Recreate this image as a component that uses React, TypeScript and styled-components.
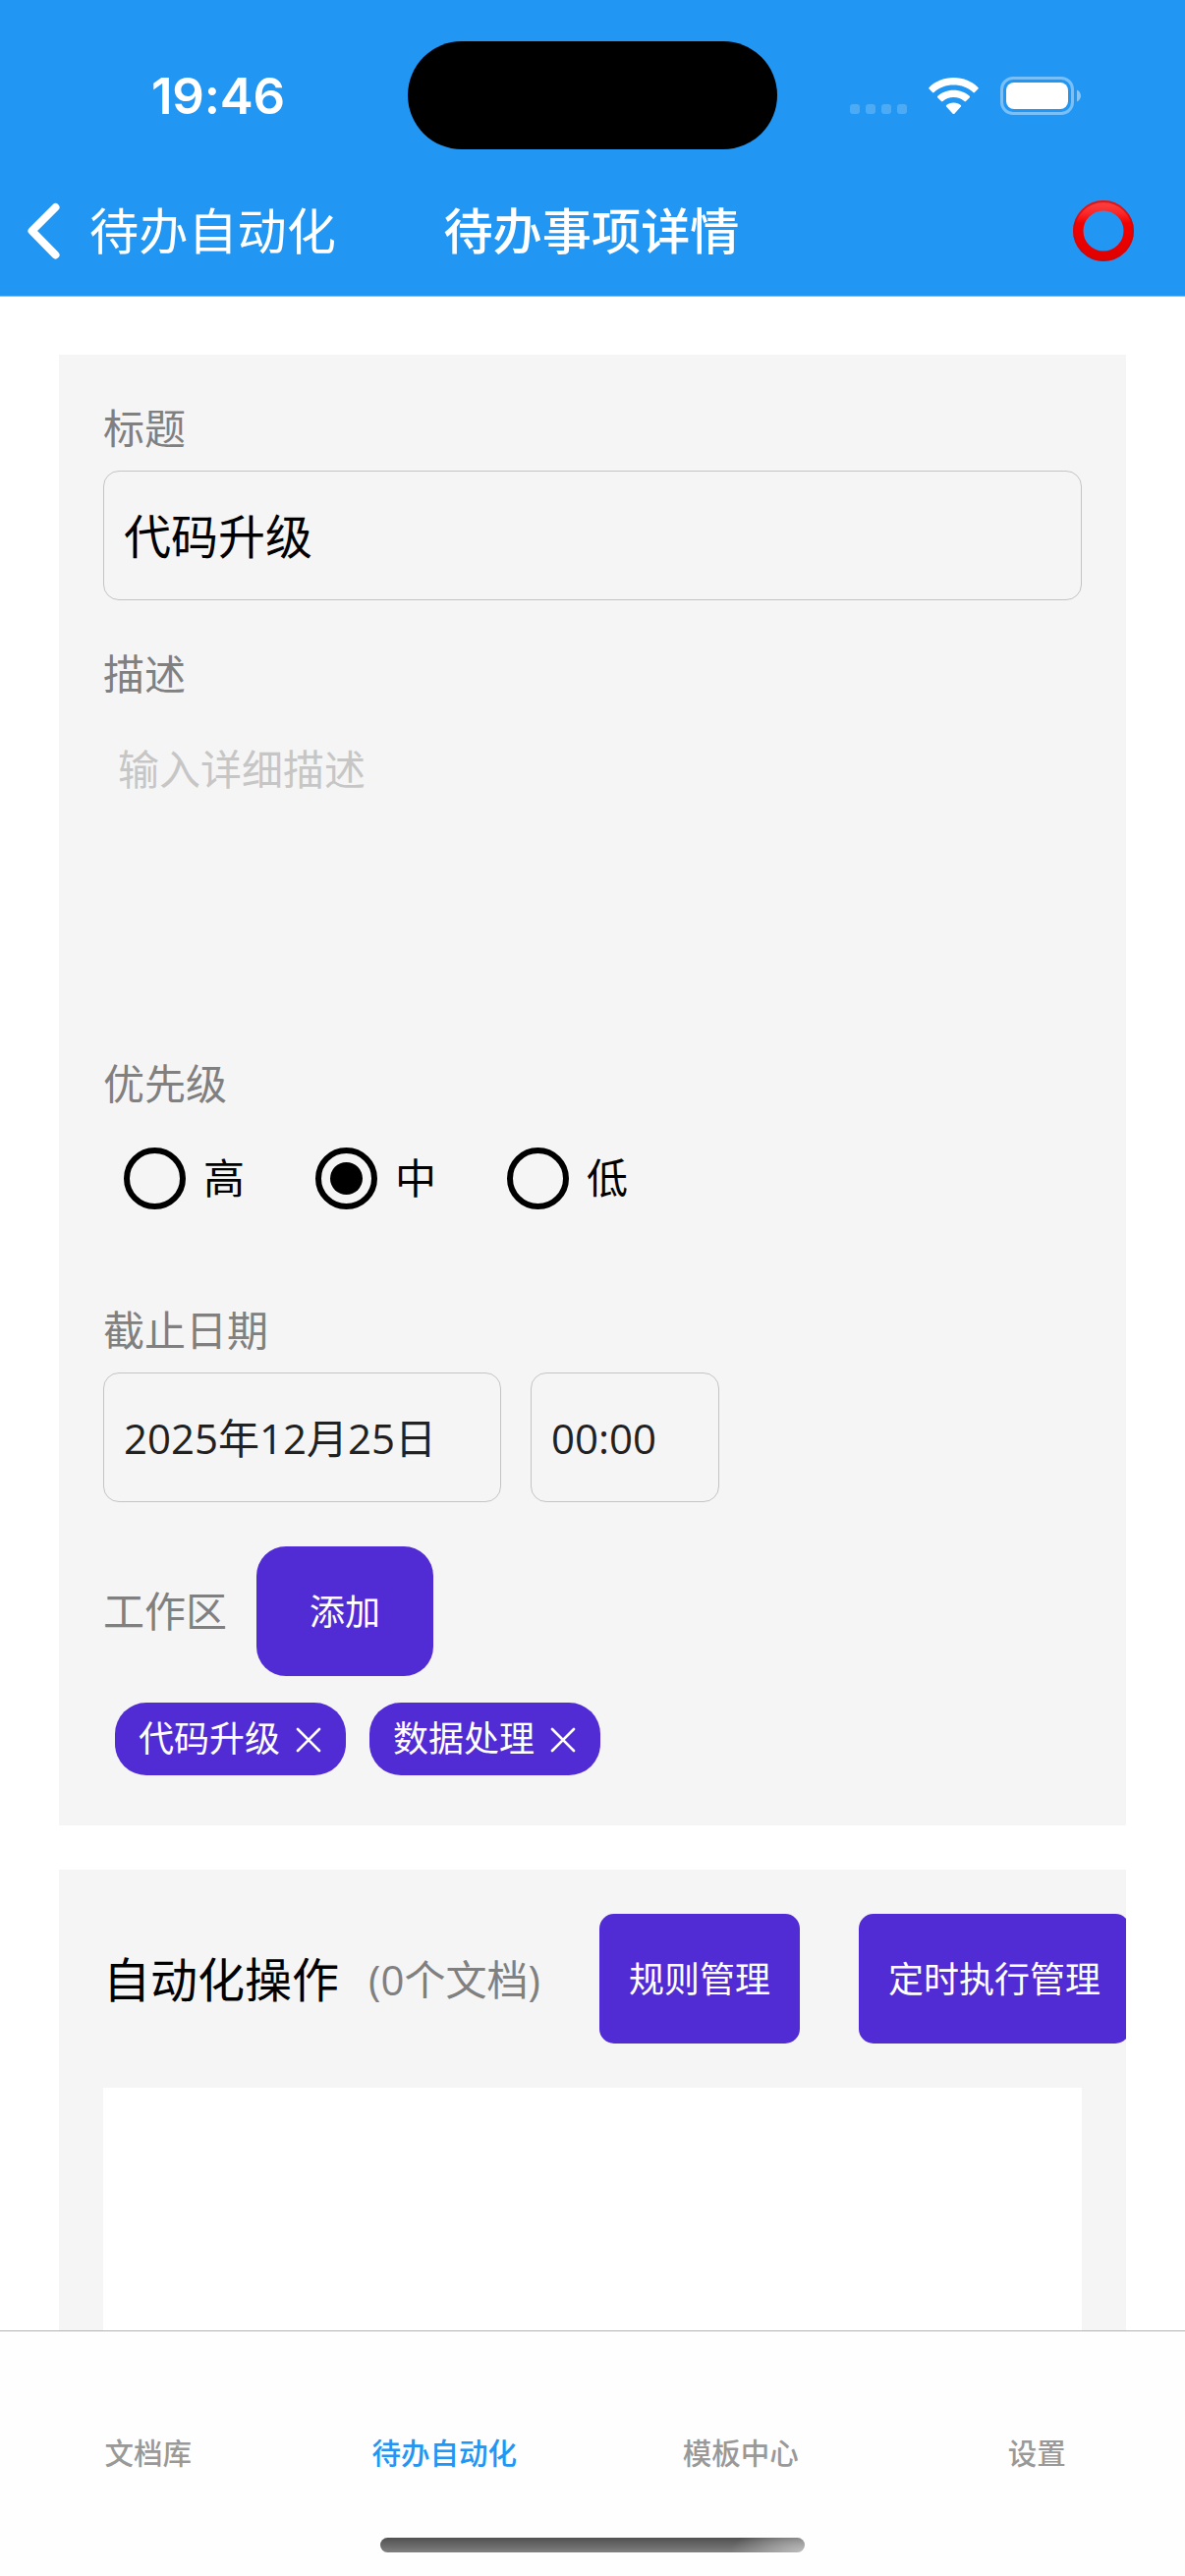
import React from "react";
import styled, { createGlobalStyle } from "styled-components";

const GlobalStyle = createGlobalStyle`
  *, *::before, *::after { box-sizing: border-box; }
  body {
    margin: 0;
    background: #fff;
    font-family: "Open Sans", "Noto Sans CJK SC", sans-serif;
    line-height: 1.36;
  }
`;

const colors = {
  bar: "#2196f3",
  primary: "#512bd4",
  panel: "#f5f5f5",
  muted: "#808080",
  outline: "#c4c4c4",
};

const Screen = styled.div`
  width: 1206px;
  height: 2622px;
  display: flex;
  flex-direction: column;
  overflow: hidden;
  background: #fff;
`;

const Header = styled.header`
  flex: none;
  height: 302px;
  background: ${colors.bar};
  border-bottom: 1px solid #a9b4bd;
  color: #fff;
`;

const StatusBar = styled.div`
  height: 168px;
  padding-top: 42px;
  display: grid;
  grid-template-columns: 415px 376px 415px;
`;

const Clock = styled.div`
  height: 110px;
  padding: 1px 0 0 154px;
  font: 600 51px/110px Inter, sans-serif;
  letter-spacing: -0.2px;
`;

const Island = styled.div`
  height: 110px;
  border-radius: 55px;
  background: #000;
`;

const StatusIcons = styled.div`
  height: 110px;
  padding: 1px 0 0 74px;
  display: flex;
  align-items: center;
`;

const Dots = styled.div`
  display: flex;
  gap: 6px;
  margin: 26px 22px 0 0;
  i {
    width: 10px;
    height: 10px;
    border-radius: 3px;
    background: rgba(255, 255, 255, 0.2);
  }
`;

const NavBar = styled.nav`
  height: 133px;
  display: grid;
  grid-template-columns: 400px 404px 402px;
  align-items: center;
`;

const BackButton = styled.div`
  display: flex;
  align-items: center;
  padding-left: 27px;
  gap: 30px;
  font: 400 50.2px/70px "Open Sans", "Noto Sans CJK SC", sans-serif;
`;

const NavTitle = styled.h1`
  margin: 0;
  padding-bottom: 5px;
  text-align: center;
  font: 500 50.2px/70px "Noto Sans CJK SC", sans-serif;
`;

const NavAction = styled.div`
  display: flex;
  justify-content: flex-end;
  padding-right: 52px;
`;

const Content = styled.main`
  flex: 1;
  min-height: 0;
  overflow: hidden;
  padding: 59px 60px 0;
  display: flex;
  flex-direction: column;
  gap: 45px;
`;

const Card = styled.section<{ $height: number }>`
  flex: none;
  height: ${(p) => p.$height}px;
  padding: 45px 45px 0;
  overflow: hidden;
  background: ${colors.panel};
`;

const Label = styled.div`
  height: 58px;
  margin-bottom: 15px;
  padding-top: 1px;
  font-size: 42px;
  line-height: 57px;
  color: ${colors.muted};
`;

const Field = styled.div<{ $width?: number; $size?: number; $color?: string }>`
  width: ${(p) => (p.$width ? `${p.$width}px` : "100%")};
  height: 132px;
  padding: 1px 20px 0;
  display: flex;
  align-items: center;
  border: 1px solid ${colors.outline};
  border-radius: 16px;
  font-size: ${(p) => p.$size ?? 42}px;
  color: ${(p) => p.$color ?? "#212121"};
  white-space: nowrap;
`;

const FieldRow = styled.div`
  display: flex;
  gap: 30px;
  margin-bottom: 45px;
`;

const Description = styled.div`
  height: 299px;
  margin-bottom: 45px;
  padding: 25px 15px;
  font-size: 42px;
  line-height: 57px;
  color: #c6c6c6;
`;

const RadioGroup = styled.div`
  height: 178px;
  padding: 22px 0 0 21px;
  display: flex;
  align-items: flex-start;
`;

const RadioOption = styled.div`
  width: 195px;
  height: 63px;
  display: flex;
  align-items: center;
  gap: 18px;
  font-size: 42px;
  line-height: 57px;
  color: #000;
`;

const RadioName = styled.span`
  padding-bottom: 3px;
`;

const RadioMark = styled.span<{ $checked: boolean }>`
  width: 63px;
  height: 63px;
  display: grid;
  place-items: center;
  border: 6px solid #000;
  border-radius: 50%;
  &::after {
    content: "";
    width: 33px;
    height: 33px;
    border-radius: 50%;
    background: ${(p) => (p.$checked ? "#000" : "transparent")};
  }
`;

const WorkspaceRow = styled.div`
  height: 132px;
  display: flex;
  align-items: center;
  gap: 30px;
  font-size: 42px;
  color: ${colors.muted};
`;

const Button = styled.div<{ $width: number; $radius: number }>`
  flex: none;
  width: ${(p) => p.$width}px;
  height: 132px;
  padding-top: 3px;
  display: flex;
  align-items: center;
  justify-content: center;
  border-radius: ${(p) => p.$radius}px;
  background: ${colors.primary};
  color: #fff;
  font-size: 36px;
`;

const Chips = styled.div`
  display: flex;
  gap: 24px;
  padding: 27px 0 0 12px;
`;

const Chip = styled.div`
  width: 235px;
  height: 74px;
  padding: 1px 24px 0;
  display: flex;
  align-items: center;
  gap: 16px;
  border-radius: 32px;
  background: ${colors.primary};
  color: #fff;
  font-size: 36px;
  white-space: nowrap;
`;

const AutomationHead = styled.div`
  height: 132px;
  display: flex;
  align-items: center;
  white-space: nowrap;
`;

const AutomationTitle = styled.h2`
  width: 270px;
  margin: 0;
  padding-top: 1px;
  flex: none;
  font-size: 48px;
  font-weight: 400;
  color: #000;
`;

const DocCount = styled.span`
  width: 235px;
  padding-top: 2px;
  flex: none;
  font-size: 42px;
  color: ${colors.muted};
`;

const Actions = styled.div`
  display: flex;
  gap: 60px;
`;

const DocList = styled.div`
  height: 600px;
  margin-top: 45px;
  background: #fff;
`;

const TabBar = styled.footer`
  flex: none;
  height: 250px;
  display: flex;
  flex-direction: column;
  align-items: center;
  background: #fefefe;
  border-top: 1px solid #b2b2b2;
`;

const Tabs = styled.div`
  width: 100%;
  height: 210px;
  padding-top: 101px;
  display: grid;
  grid-template-columns: repeat(4, 1fr);
`;

const Tab = styled.div<{ $active: boolean }>`
  text-align: center;
  font: 500 29.5px/42px "Noto Sans CJK SC", sans-serif;
  color: ${(p) => (p.$active ? colors.bar : "#999")};
`;

const HomeIndicator = styled.div`
  width: 432px;
  height: 15px;
  border-radius: 8px;
  background: radial-gradient(ellipse 75px 30px at 100% 100%, #bdbdbd, rgba(150, 150, 150, 0)),
    linear-gradient(#505050, #808080);
`;

const BackIcon = () => (
  <svg width="34" height="58" viewBox="0 0 34 58" fill="none">
    <path d="M29.500 5 L5.500 29 L29.500 53.500" stroke="#fff" strokeWidth="8" strokeLinecap="round" strokeLinejoin="round" />
  </svg>
);

const WifiIcon = () => (
  <svg width="51" height="38" viewBox="0 0 51 38" fill="#fff">
    <path d="M25.500 0 C35.500 0 44.500 4 50.400 9.900 Q51.200 10.700 50.400 11.500 L47 15 Q46.200 15.800 45.400 15 C40.200 10 33.200 7.500 25.500 7.500 C17.800 7.500 10.800 10 5.600 15 Q4.800 15.800 4 15 L0.600 11.500 Q-0.200 10.700 0.600 9.900 C6.500 4 15.500 0 25.500 0 Z" />
    <path d="M25.500 12.700 C32 12.700 37.700 15 41.700 18.800 Q42.500 19.600 41.700 20.400 L38 24.100 Q37.200 24.900 36.400 24.100 C33.400 21.400 29.700 20 25.500 20 C21.300 20 17.600 21.400 14.600 24.100 Q13.800 24.900 13 24.100 L9.300 20.400 Q8.500 19.600 9.300 18.800 C13.300 15 19 12.700 25.500 12.700 Z" />
    <path d="M25.500 25.500 C28.500 25.500 30.900 26.500 32.800 28 Q33.600 28.700 32.900 29.500 L26.400 36.700 Q25.500 37.500 24.600 36.700 L18.100 29.500 Q17.400 28.700 18.200 28 C20.100 26.500 22.500 25.500 25.500 25.500 Z" />
  </svg>
);

const Battery = styled.svg`
  margin-left: 22px;
`;

const BatteryIcon = () => (
  <Battery width="82" height="39" viewBox="0 0 82 39">
    <rect x="1.500" y="1.500" width="72" height="36" rx="11.500" fill="none" stroke="#fff" strokeOpacity="0.400" strokeWidth="3" />
    <rect x="6" y="6" width="63" height="27" rx="8" fill="#fff" />
    <path d="M78 13.500 C80.500 14.500 82 17 82 19.500 C82 22 80.500 24.500 78 25.500 Z" fill="#fff" fillOpacity="0.450" />
  </Battery>
);

const RingIcon = () => (
  <svg width="62" height="62" viewBox="0 0 62 62" fill="none">
    <defs>
      <linearGradient id="ring" x1="0" y1="0" x2="0" y2="1">
        <stop offset="0" stopColor="#fb3a3a" />
        <stop offset="0.160" stopColor="#fa2626" />
        <stop offset="0.350" stopColor="#f40000" />
        <stop offset="1" stopColor="#e20000" />
      </linearGradient>
    </defs>
    <circle cx="31" cy="31" r="25.700" stroke="url(#ring)" strokeWidth="10.400" />
    <circle cx="31" cy="31" r="30" stroke="#c80a10" strokeOpacity="0.700" strokeWidth="1.800" />
  </svg>
);

const CloseIcon = () => (
  <svg width="26" height="26" viewBox="0 0 26 26" stroke="#fff" strokeWidth="2.600" strokeLinecap="round">
    <path d="M2 2 L24 24 M24 2 L2 24" />
  </svg>
);

const priorities = ["高", "中", "低"];
const workspaces = ["代码升级", "数据处理"];
const tabs = ["文档库", "待办自动化", "模板中心", "设置"];

export default function App() {
  return (
    <Screen lang="zh-CN">
      <GlobalStyle />
      <Header>
        <StatusBar>
          <Clock>19:46</Clock>
          <Island />
          <StatusIcons>
            <Dots>
              <i />
              <i />
              <i />
              <i />
            </Dots>
            <WifiIcon />
            <BatteryIcon />
          </StatusIcons>
        </StatusBar>
        <NavBar>
          <BackButton>
            <BackIcon />
            <span>待办自动化</span>
          </BackButton>
          <NavTitle>待办事项详情</NavTitle>
          <NavAction>
            <RingIcon />
          </NavAction>
        </NavBar>
      </Header>

      <Content>
        <Card $height={1497}>
          <Label>标题</Label>
          <FieldRow>
            <Field $size={48} $color="#000">
              代码升级
            </Field>
          </FieldRow>
          <Label>描述</Label>
          <Description>输入详细描述</Description>
          <Label>优先级</Label>
          <RadioGroup>
            {priorities.map((name) => (
              <RadioOption key={name}>
                <RadioMark $checked={name === "中"} />
                <RadioName>{name}</RadioName>
              </RadioOption>
            ))}
          </RadioGroup>
          <Label>截止日期</Label>
          <FieldRow>
            <Field $width={405}>2025年12月25日</Field>
            <Field $width={192}>00:00</Field>
          </FieldRow>
          <WorkspaceRow>
            <span>工作区</span>
            <Button $width={180} $radius={30}>
              添加
            </Button>
          </WorkspaceRow>
          <Chips>
            {workspaces.map((name) => (
              <Chip key={name}>
                {name}
                <CloseIcon />
              </Chip>
            ))}
          </Chips>
        </Card>

        <Card $height={900}>
          <AutomationHead>
            <AutomationTitle>自动化操作</AutomationTitle>
            <DocCount>(0个文档)</DocCount>
            <Actions>
              <Button $width={204} $radius={15}>
                规则管理
              </Button>
              <Button $width={276} $radius={15}>
                定时执行管理
              </Button>
            </Actions>
          </AutomationHead>
          <DocList />
        </Card>
      </Content>

      <TabBar>
        <Tabs>
          {tabs.map((name) => (
            <Tab key={name} $active={name === "待办自动化"}>
              {name}
            </Tab>
          ))}
        </Tabs>
        <HomeIndicator />
      </TabBar>
    </Screen>
  );
}
